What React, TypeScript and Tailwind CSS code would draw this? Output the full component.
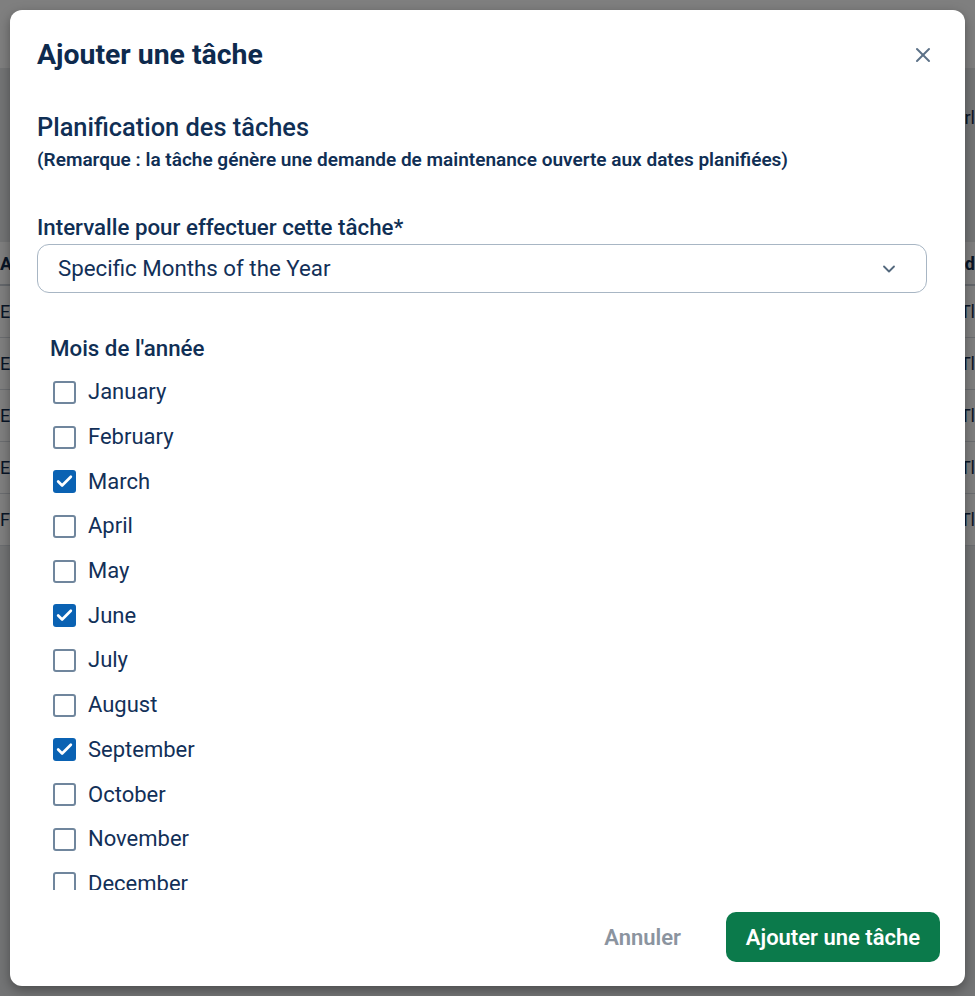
import { X, ChevronDown, Check } from "lucide-react";

const months = [
  { name: "January", checked: false },
  { name: "February", checked: false },
  { name: "March", checked: true },
  { name: "April", checked: false },
  { name: "May", checked: false },
  { name: "June", checked: true },
  { name: "July", checked: false },
  { name: "August", checked: false },
  { name: "September", checked: true },
  { name: "October", checked: false },
  { name: "November", checked: false },
  { name: "December", checked: false },
];

const rows = ["E", "E", "E", "E", "F"];

function BackgroundPage() {
  return (
    <div className="flex h-[996px] flex-col bg-[#e6e8eb] font-['Roboto',sans-serif] text-[#102a4c]">
      <div className="h-[68px] shrink-0 bg-white" />
      <div className="flex flex-col pt-[22px]">
        <div className="flex h-[55px] items-center justify-end text-[18px]">rl</div>
        <div className="mt-[97px] bg-white">
          <div className="flex h-[44px] items-center justify-between border-b-2 border-[#c9cfd6] text-[18px] font-bold">
            <span>A</span>
            <span>d</span>
          </div>
          {rows.map((r, i) => (
            <div
              key={i}
              className="flex h-[52px] items-center justify-between border-b border-[#d7dbe0] text-[18px]"
            >
              <span>{r}</span>
              <span>Tl</span>
            </div>
          ))}
        </div>
      </div>
    </div>
  );
}

function MonthCheckbox({ name, checked }: { name: string; checked: boolean }) {
  return (
    <label className="flex h-[44.7px] shrink-0 items-center gap-[12px] pl-[3px]">
      <span
        className={
          checked
            ? "flex h-[23px] w-[23px] items-center justify-center rounded-[3px] bg-[#0a62b3]"
            : "flex h-[23px] w-[23px] items-center justify-center rounded-[3px] border-2 border-[#70869d] bg-white"
        }
      >
        {checked && <Check className="h-[19px] w-[19px] text-white" strokeWidth={3.4} />}
      </span>
      <span className="text-[22px] leading-none text-[#123058]">{name}</span>
    </label>
  );
}

export default function App() {
  return (
    <div className="relative h-[996px] w-full overflow-hidden">
      <BackgroundPage />
      <div className="absolute inset-0 flex items-center justify-center bg-black/50 p-[10px] font-['Roboto',sans-serif]">
        <div className="flex h-[976px] w-[955px] flex-col rounded-[12px] bg-white shadow-[0_4px_12px_rgba(0,0,0,0.35)]">
          <div className="flex items-center justify-between pl-[27px] pr-[30px] pt-[27px]">
            <h2 className="text-[28.4px] font-bold leading-[36px] text-[#0e2a4d]">Ajouter une tâche</h2>
            <button type="button" className="flex h-[24px] w-[24px] items-center justify-center text-[#5c7187]">
              <X className="h-[26px] w-[26px]" strokeWidth={2} />
            </button>
          </div>

          <div className="flex min-h-0 flex-1 flex-col overflow-hidden pl-[27px] pr-[38px]">
            <h3 className="mt-[38px] text-[25.4px] font-medium leading-[32px] text-[#102f55]">
              Planification des tâches
            </h3>
            <p className="mt-[3px] text-[19px] font-semibold leading-[28px] text-[#102f55]">
              (Remarque : la tâche génère une demande de maintenance ouverte aux dates planifiées)
            </p>

            <label className="mt-[39px] text-[22.3px] font-medium leading-[28px] text-[#102f55]">
              Intervalle pour effectuer cette tâche*
            </label>
            <div className="mt-[3px] flex h-[49px] shrink-0 items-center justify-between rounded-[12px] border border-[#a8b6c4] pl-[20px] pr-[27px]">
              <span className="text-[22.3px] text-[#123058]">Specific Months of the Year</span>
              <ChevronDown className="h-[20px] w-[20px] text-[#53687d]" strokeWidth={2.2} />
            </div>

            <div className="mt-[41px] pl-[13px]">
              <p className="text-[22.3px] font-medium leading-[28px] text-[#102f55]">Mois de l'année</p>
              <div className="mt-[8px] flex flex-col">
                {months.map((m) => (
                  <MonthCheckbox key={m.name} name={m.name} checked={m.checked} />
                ))}
              </div>
            </div>
          </div>

          <div className="flex shrink-0 items-center justify-end gap-[45px] pb-[24px] pr-[25px] pt-[22px]">
            <button type="button" className="text-[22px] font-semibold text-[#8b949f]">
              Annuler
            </button>
            <button
              type="button"
              className="flex h-[50px] w-[214px] items-center justify-center rounded-[10px] bg-[#0b7a4b] text-[22px] font-semibold text-white"
            >
              Ajouter une tâche
            </button>
          </div>
        </div>
      </div>
    </div>
  );
}
